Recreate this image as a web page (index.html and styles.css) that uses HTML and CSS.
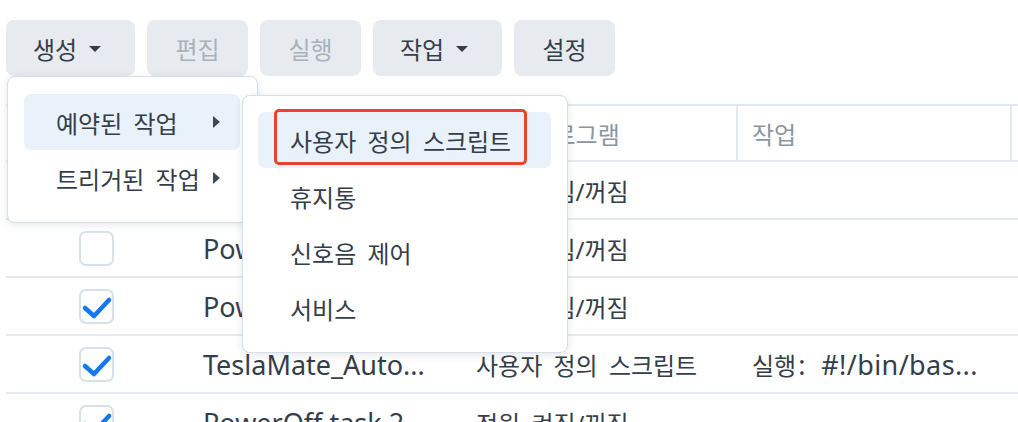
FILE: index.html
```html
<!DOCTYPE html>
<html lang="ko">
<head>
<meta charset="utf-8">
<link rel="stylesheet" href="styles.css">
</head>
<body>
<div class="page">
  <div class="toolbar">
    <button class="btn btn-wide">생성 <span class="caret"></span></button>
    <button class="btn disabled">편집</button>
    <button class="btn disabled">실행</button>
    <button class="btn btn-wide">작업 <span class="caret"></span></button>
    <button class="btn">설정</button>
  </div>

  <div class="grid">
    <div class="row head">
      <div class="cell c-check"></div>
      <div class="cell c-name">작업</div>
      <div class="cell c-prog">응용 프로그램</div>
      <div class="cell c-act">작업</div>
      <div class="cell c-more"></div>
    </div>
    <div class="row">
      <div class="cell c-check"><span class="cb checked"><svg viewBox="0 0 35 35"><path d="M6 19 L15 27 L30 11"/></svg></span></div>
      <div class="cell c-name latin">PowerOn task</div>
      <div class="cell c-prog">전원 켜짐/꺼짐</div>
      <div class="cell c-act"></div>
      <div class="cell c-more"></div>
    </div>
    <div class="row">
      <div class="cell c-check"><span class="cb"></span></div>
      <div class="cell c-name latin">PowerOn task 2</div>
      <div class="cell c-prog">전원 켜짐/꺼짐</div>
      <div class="cell c-act"></div>
      <div class="cell c-more"></div>
    </div>
    <div class="row">
      <div class="cell c-check"><span class="cb checked"><svg viewBox="0 0 35 35"><path d="M6 19 L15 27 L30 11"/></svg></span></div>
      <div class="cell c-name latin">PowerOff task</div>
      <div class="cell c-prog">전원 켜짐/꺼짐</div>
      <div class="cell c-act"></div>
      <div class="cell c-more"></div>
    </div>
    <div class="row">
      <div class="cell c-check"><span class="cb checked"><svg viewBox="0 0 35 35"><path d="M6 19 L15 27 L30 11"/></svg></span></div>
      <div class="cell c-name latin">TeslaMate_Auto...</div>
      <div class="cell c-prog">사용자 정의 스크립트</div>
      <div class="cell c-act">실행<span class="latin cmd">: #!/bin/bas...</span></div>
      <div class="cell c-more"></div>
    </div>
    <div class="row">
      <div class="cell c-check"><span class="cb checked"><svg viewBox="0 0 35 35"><path d="M6 19 L15 27 L30 11"/></svg></span></div>
      <div class="cell c-name latin">PowerOff task 2</div>
      <div class="cell c-prog">전원 켜짐/꺼짐</div>
      <div class="cell c-act"></div>
      <div class="cell c-more"></div>
    </div>
  </div>

  <div class="menu menu-main">
    <div class="item active">예약된 작업 <span class="arrow"></span></div>
    <div class="item">트리거된 작업 <span class="arrow"></span></div>
  </div>

  <div class="menu menu-sub">
    <div class="item active">사용자 정의 스크립트</div>
    <div class="item">휴지통</div>
    <div class="item">신호음 제어</div>
    <div class="item">서비스</div>
    <div class="highlight-box"></div>
  </div>
</div>
</body>
</html>
```

FILE: styles.css
```css
* { box-sizing: border-box; }
html, body {
  margin: 0;
  padding: 0;
  background: #ffffff;
  overflow: hidden;
}
body {
  width: 1018px;
  height: 422px;
  font-family: "Noto Sans", "Noto Sans CJK KR", sans-serif;
  font-size: 24px;
  word-spacing: 5px;
  color: #343e4a;
}
.latin {
  font-size: 27px;
  word-spacing: 0;
}
.cmd {
  margin-left: 2px;
  word-spacing: 8px;
  letter-spacing: 0.4px;
}
.page {
  position: relative;
  height: 422px;
  overflow: hidden;
}
.toolbar {
  display: flex;
  gap: 12px;
  padding: 20px 0 0 6px;
}
.btn {
  height: 56px;
  min-width: 101px;
  padding: 0 26px;
  border: none;
  border-radius: 8px;
  background: #e7ebf0;
  font-family: inherit;
  font-size: 24px;
  color: #343e4a;
  display: flex;
  align-items: center;
  justify-content: center;
  gap: 12px;
}
.btn-wide {
  width: 129px;
  justify-content: flex-start;
  padding-left: 27px;
}
.btn.disabled { color: #a9b1ba; }
.caret {
  width: 0;
  height: 0;
  border-left: 6px solid transparent;
  border-right: 6px solid transparent;
  border-top: 6px solid #343e4a;
  margin-top: 2px;
}

.grid {
  margin-top: 28px;
  margin-left: 6px;
}
.row {
  display: grid;
  grid-template-columns: 181px 273px 276px 274px 1fr;
  height: 58px;
  border-bottom: 2px solid #e6eaef;
  align-items: stretch;
}
.row.head {
  border-top: 2px solid #e3e8ee;
  color: #8b95a0;
}
.cell {
  display: flex;
  align-items: center;
  padding: 0 16px;
  white-space: nowrap;
  overflow: hidden;
}
.head .cell + .cell { border-left: 2px solid #e3e8ee; }
.head .cell { padding-left: 14px; }
.c-check { justify-content: center; padding: 0; }
.cb {
  width: 35px;
  height: 35px;
  border: 2px solid #d8e0e8;
  border-radius: 7px;
  background: #fff;
  display: block;
  position: relative;
}
.cb svg {
  position: absolute;
  left: -2px;
  top: -2px;
  width: 35px;
  height: 35px;
  overflow: visible;
}
.cb path {
  fill: none;
  stroke: #1479ef;
  stroke-width: 4.5;
  stroke-linecap: round;
  stroke-linejoin: round;
}

.menu {
  position: absolute;
  background: #fff;
  border: 1px solid #d6dee7;
  border-radius: 8px;
  box-shadow: 0 2px 8px rgba(40, 60, 80, 0.12);
  display: flex;
  flex-direction: column;
}
.menu-main {
  left: 7px;
  top: 76px;
  width: 251px;
  padding: 17px 17px 16px 16px;
}
.menu-sub {
  left: 242px;
  top: 95px;
  width: 326px;
  padding: 16px 16px 16px 15px;
}
.item {
  height: 56px;
  padding: 0 20px 0 32px;
  border-radius: 7px;
  display: flex;
  align-items: center;
  white-space: nowrap;
}
.item.active { background: #e9f1fb; }
.arrow {
  margin-left: auto;
  width: 0;
  height: 0;
  border-top: 6px solid transparent;
  border-bottom: 6px solid transparent;
  border-left: 7px solid #3e4853;
}
.highlight-box {
  position: absolute;
  left: 31px;
  top: 13px;
  width: 253px;
  height: 56px;
  border: 3px solid #e9442a;
  border-radius: 5px;
}
```
